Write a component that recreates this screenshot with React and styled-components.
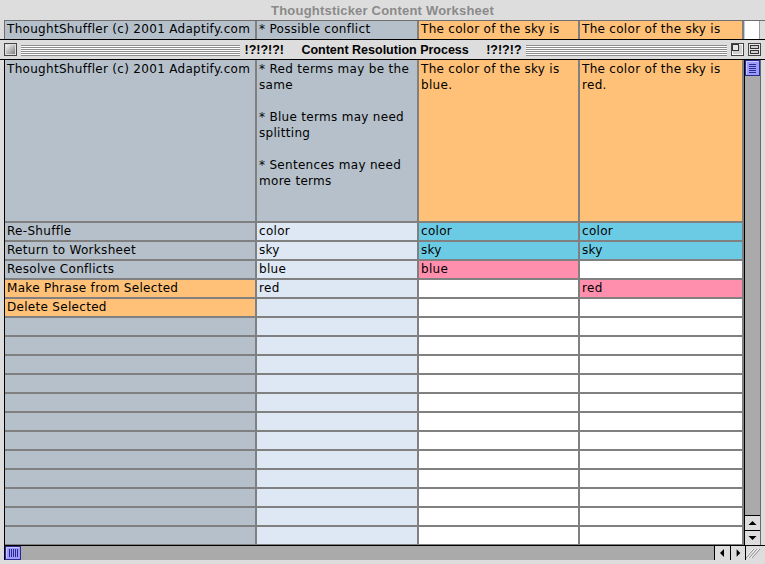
import React from "react";
import styled, { createGlobalStyle } from "styled-components";

const GlobalStyle = createGlobalStyle`
  html, body {
    margin: 0;
    padding: 0;
    background: #dddddd;
  }
  body {
    font-family: "DejaVu Sans", "Open Sans", sans-serif;
    font-size: 12px;
    color: #000;
  }
`;

const COLS = "250px 160px 159px 162px";

const colors = {
  gray: "#b6c0cb",
  light: "#dde8f4",
  orange: "#ffc177",
  cyan: "#6ccbe4",
  pink: "#ff8fad",
  white: "#ffffff",
};

const Screen = styled.div`
  width: 765px;
  height: 564px;
  background: #dddddd;
  display: flex;
  flex-direction: column;
  overflow: hidden;
`;

const WindowTitle = styled.div`
  height: 20px;
  display: flex;
  align-items: center;
  justify-content: center;
  font-family: "Liberation Sans", Arial, sans-serif;
  font-weight: bold;
  font-size: 13px;
  letter-spacing: 0.2px;
  color: #8a8a8a;
`;

const TopStrip = styled.div`
  display: flex;
  height: 18px;
  margin-left: 4px;
  border-top: 1px solid #6e6e6e;
  border-left: 1px solid #6e6e6e;
`;

const StripGrid = styled.div`
  display: grid;
  grid-template-columns: ${COLS};
  gap: 2px;
  background: #808080;
  padding-right: 2px;
`;

const StripEnd = styled.div`
  width: 14px;
  background: #ffffff;
  border-left: 1px solid #b8d0ec;
  border-right: 1px solid #9a9a9a;
`;

const Inner = styled.div`
  flex: 1;
  display: flex;
  flex-direction: column;
  border-top: 1px solid #000;
  min-height: 0;
`;

const InnerTitle = styled.div`
  height: 19px;
  display: flex;
  align-items: center;
  padding: 0 4px;
  gap: 4px;
`;

const Stripes = styled.div`
  flex: 1 1 ${(p) => p.$basis || "0px"};
  height: 11px;
  margin-top: 1px;
  background: repeating-linear-gradient(
    to bottom,
    #8c8c8c 0px,
    #8c8c8c 1px,
    #ffffff 1px,
    #ffffff 2px
  );
`;

const InnerTitleText = styled.div`
  font-family: "Liberation Sans", Arial, sans-serif;
  font-weight: bold;
  font-size: 12.5px;
  white-space: pre;
  padding: 0 0 0 0;
`;

const BoxButton = styled.svg`
  display: block;
  flex: none;
`;

const Body = styled.div`
  display: flex;
  border-top: 1px solid #000;
  height: 485px;
`;

const GridWrap = styled.div`
  margin-left: 4px;
  border-left: 1px solid #000;
  display: flex;
`;

const Grid = styled.div`
  display: grid;
  grid-template-columns: ${COLS};
  grid-template-rows: 161px repeat(17, 17px);
  gap: 2px;
  background: #808080;
  padding: 0 2px 1px 0;
`;

const Cell = styled.div`
  background: ${(p) => colors[p.$bg]};
  padding: ${(p) => (p.$tall ? "1px 1px 0 2px" : "0 1px 0 2px")};
  line-height: ${(p) => (p.$tall ? "16px" : "17px")};
  letter-spacing: 0.3px;
  white-space: pre;
  overflow: hidden;
`;

const VScroll = styled.div`
  width: 15px;
  border-left: 1px solid #000;
  border-right: 1px solid #6a6a6a;
  background: #aaaaaa;
  display: flex;
  flex-direction: column;
`;

const Spacer = styled.div`
  flex: 1;
`;

const ArrowBox = styled.div`
  width: ${(p) => (p.$w ? p.$w : "15px")};
  height: ${(p) => (p.$h ? p.$h : "14px")};
  background: #dddddd;
  border-top: ${(p) => (p.$top ? "1px solid #000" : "none")};
  border-left: ${(p) => (p.$left ? "1px solid #000" : "none")};
  display: flex;
  align-items: center;
  justify-content: center;
  flex: none;
`;

const HScroll = styled.div`
  display: flex;
  height: 14px;
  border-top: 1px solid #000;
  margin-left: 4px;
`;

const HTrack = styled.div`
  flex: none;
  width: 709px;
  border-left: 1px solid #000;
  background: #aaaaaa;
  display: flex;
  align-items: center;
`;

const Grow = styled.div`
  width: 16px;
  height: 14px;
  border-left: 1px solid #000;
  background: #dddddd;
  flex: none;
`;

const notes = "* Red terms may be the\nsame\n\n* Blue terms may need\nsplitting\n\n* Sentences may need\nmore terms";

const rows = [
  [["Re-Shuffle", "gray"], ["color", "light"], ["color", "cyan"], ["color", "cyan"]],
  [["Return to Worksheet", "gray"], ["sky", "light"], ["sky", "cyan"], ["sky", "cyan"]],
  [["Resolve Conflicts", "gray"], ["blue", "light"], ["blue", "pink"], ["", "white"]],
  [["Make Phrase from Selected", "orange"], ["red", "light"], ["", "white"], ["red", "pink"]],
  [["Delete Selected", "orange"], ["", "light"], ["", "white"], ["", "white"]],
  ...Array.from({ length: 12 }, () => [["", "gray"], ["", "light"], ["", "white"], ["", "white"]]),
];

const CloseBox = () => (
  <BoxButton width="13" height="13" viewBox="0 0 13 13">
    <defs>
      <linearGradient id="cb" x1="0" y1="0" x2="1" y2="1">
        <stop offset="0" stopColor="#f4f4f4" />
        <stop offset="1" stopColor="#808080" />
      </linearGradient>
    </defs>
    <rect x="0.5" y="0.5" width="12" height="12" fill="#dddddd" stroke="#444" />
    <rect x="2" y="2" width="9" height="9" fill="url(#cb)" />
  </BoxButton>
);

const ZoomBox = () => (
  <BoxButton width="13" height="13" viewBox="0 0 13 13">
    <rect x="0.5" y="0.5" width="12" height="12" fill="#e6e6e6" stroke="#444" />
    <rect x="1.5" y="1.5" width="10" height="10" fill="#cfcfcf" stroke="#fff" strokeWidth="0.8" />
    <rect x="1.5" y="1.5" width="6" height="6" fill="#e6e6e6" stroke="#333" />
  </BoxButton>
);

const CollapseBox = () => (
  <BoxButton width="13" height="13" viewBox="0 0 13 13">
    <rect x="0.5" y="0.5" width="12" height="12" fill="#e6e6e6" stroke="#444" />
    <rect x="2.5" y="2.5" width="8" height="3" fill="#cfcfcf" stroke="#333" />
    <rect x="2.5" y="7.5" width="8" height="3" fill="#cfcfcf" stroke="#333" />
  </BoxButton>
);

const VThumb = () => (
  <svg width="15" height="16" viewBox="0 0 15 16" style={{ display: "block" }}>
    <rect x="0.5" y="0.5" width="14" height="15" fill="#9c9cff" stroke="#2b2b8f" />
    <path d="M1.5 14.5V1.5H13.5" fill="none" stroke="#c8c8ff" />
    {[4, 6, 8, 10, 12].map((y) => (
      <path key={y} d={`M4 ${y + 0.5}H11`} stroke="#2b2b8f" />
    ))}
  </svg>
);

const HThumb = () => (
  <svg width="16" height="14" viewBox="0 0 16 14" style={{ display: "block" }}>
    <rect x="0.5" y="0.5" width="15" height="13" fill="#9c9cff" stroke="#2b2b8f" />
    <path d="M1.5 12.5V1.5H14.5" fill="none" stroke="#c8c8ff" />
    {[4, 6, 8, 10, 12].map((x) => (
      <path key={x} d={`M${x + 0.5} 3V11`} stroke="#2b2b8f" />
    ))}
  </svg>
);

const Arrow = ({ dir }) => {
  const pts = {
    up: "3.5,9 11.5,9 7.5,5",
    down: "3.5,5 11.5,5 7.5,9",
    left: "9,3 9,11 5,7",
    right: "6,3 6,11 10,7",
  }[dir];
  return (
    <svg width="15" height="14" viewBox="0 0 15 14" style={{ display: "block" }}>
      <polygon points={pts} fill="#000" />
    </svg>
  );
};

const GrowIcon = () => (
  <svg width="16" height="14" viewBox="0 0 16 14" style={{ display: "block" }}>
    {[5, 8, 11].map((o) => (
      <g key={o}>
        <path d={`M${o + 2} 3L${o - 6} 12`} stroke="#ffffff" />
        <path d={`M${o + 3} 3L${o - 5} 12`} stroke="#8a8a8a" />
      </g>
    ))}
  </svg>
);

export default function App() {
  return (
    <>
      <GlobalStyle />
      <Screen>
        <WindowTitle>Thoughtsticker Content Worksheet</WindowTitle>
        <TopStrip>
          <StripGrid>
            <Cell $bg="gray">ThoughtShuffler (c) 2001 Adaptify.com</Cell>
            <Cell $bg="gray">* Possible conflict</Cell>
            <Cell $bg="orange">The color of the sky is</Cell>
            <Cell $bg="orange">The color of the sky is</Cell>
          </StripGrid>
          <StripEnd />
        </TopStrip>
        <Inner>
          <InnerTitle>
            <CloseBox />
            <Stripes $basis="18px" />
            <InnerTitleText>{"!?!?!?!     Content Resolution Process     !?!?!?"}</InnerTitleText>
            <Stripes />
            <ZoomBox />
            <CollapseBox />
          </InnerTitle>
          <Body>
            <GridWrap>
              <Grid>
                <Cell $bg="gray" $tall>ThoughtShuffler (c) 2001 Adaptify.com</Cell>
                <Cell $bg="gray" $tall>{notes}</Cell>
                <Cell $bg="orange" $tall>{"The color of the sky is\nblue."}</Cell>
                <Cell $bg="orange" $tall>{"The color of the sky is\nred."}</Cell>
                {rows.map((row, i) =>
                  row.map(([text, bg], j) => (
                    <Cell key={`${i}-${j}`} $bg={bg}>
                      {text}
                    </Cell>
                  ))
                )}
              </Grid>
            </GridWrap>
            <VScroll>
              <VThumb />
              <Spacer />
              <ArrowBox $top>
                <Arrow dir="up" />
              </ArrowBox>
              <ArrowBox $top>
                <Arrow dir="down" />
              </ArrowBox>
            </VScroll>
          </Body>
          <HScroll>
            <HTrack>
              <HThumb />
            </HTrack>
            <ArrowBox $left $w="15px">
              <Arrow dir="left" />
            </ArrowBox>
            <ArrowBox $left $w="14px">
              <Arrow dir="right" />
            </ArrowBox>
            <Grow>
              <GrowIcon />
            </Grow>
          </HScroll>
        </Inner>
      </Screen>
    </>
  );
}
